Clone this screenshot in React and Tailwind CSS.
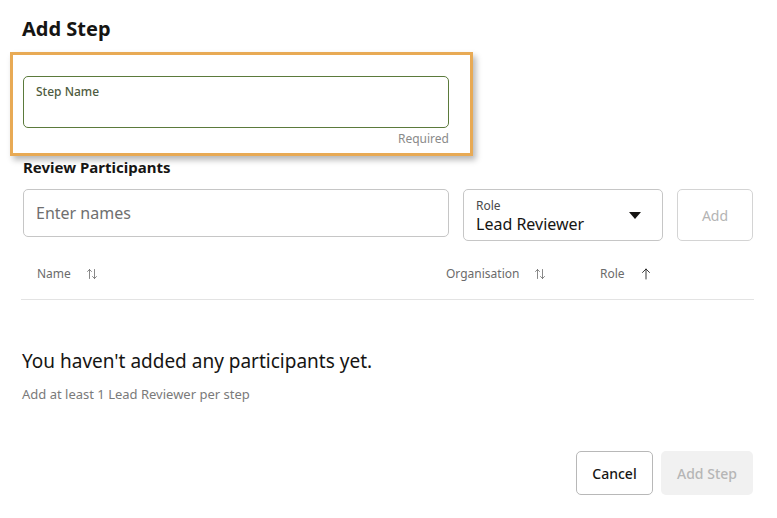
import { useState } from 'react';

function SortIcon() {
    return (
        <svg className="w-[12px] h-[12px]" viewBox="0 0 24 24" fill="none" stroke="currentColor" strokeWidth="1.6" strokeLinecap="round" strokeLinejoin="round">
            <path d="M3 7l4-4 4 4" />
            <path d="M7 3v18" />
            <path d="M13 17l4 4 4-4" />
            <path d="M17 21V3" />
        </svg>
    );
}

function UpIcon() {
    return (
        <svg className="w-[12px] h-[12px]" viewBox="0 0 24 24" fill="none" stroke="currentColor" strokeWidth="1.8" strokeLinecap="round" strokeLinejoin="round">
            <path d="M5 9l7-7 7 7" />
            <path d="M12 2v20" />
        </svg>
    );
}

export default function App() {
    const [names, setNames] = useState('');

    return (
        <div className="relative w-[777px] h-[518px] bg-white font-['Noto_Sans',sans-serif] text-[#161513]">
            <div className="pl-[22px] pr-[23px] pt-[15px]">
                <h1 className="text-[20px] font-bold leading-[28px]">Add Step</h1>

                {/* Step name field + highlight */}
                <div className="relative mt-[33px] ml-[1px] w-[426px]">
                    <div className="h-[52px] rounded-[5px] border border-[#5b7a3b] px-[12px] pt-[1px]">
                        <span className="text-[12px] font-medium leading-4 text-[#4e5b40]">Step Name</span>
                    </div>
                    <div className="mt-[3px] text-right text-[12px] leading-4 text-[#8a8a8a]">Required</div>
                    <div className="pointer-events-none absolute -left-[13px] -top-[24px] w-[463px] h-[104px] border-[3px] border-[#e8aa55] shadow-[3px_4px_6px_rgba(0,0,0,0.28)]" />
                </div>

                {/* Review participants */}
                <h2 className="mt-[10px] ml-[1px] text-[15px] font-bold leading-5">Review Participants</h2>

                <div className="mt-[12px] ml-[1px] flex items-start gap-[14px]">
                    <div className="w-[426px] h-[48px] rounded-[5px] border border-[#c6c6c6] px-[12px] flex items-center">
                        <input
                            value={names}
                            onChange={(e) => setNames(e.target.value)}
                            placeholder="Enter names"
                            className="w-full bg-transparent text-[16px] outline-none placeholder:text-[#6f6f6f]"
                        />
                    </div>
                    <div className="w-[200px] h-[52px] rounded-[5px] border border-[#c6c6c6] pl-[12px] pr-[21px] flex items-center justify-between">
                        <div className="flex flex-col pt-[1px]">
                            <span className="text-[12px] leading-4 text-[#4a4a4a]">Role</span>
                            <span className="text-[16px] leading-5">Lead Reviewer</span>
                        </div>
                        <svg className="w-[12px] h-[7px]" viewBox="0 0 12 7">
                            <path d="M0 0h12L6 7z" fill="#161513" />
                        </svg>
                    </div>
                    <button className="w-[76px] h-[52px] rounded-[5px] border border-[#d4d4d4] text-[14px] text-[#b4b4b4]">
                        Add
                    </button>
                </div>

                {/* Table header */}
                <div className="mt-[13px] h-[40px] flex items-center text-[12px] text-[#6b6b6b]">
                    <div className="w-[424px] pl-[15px] flex items-center gap-[15px]">
                        <span>Name</span>
                        <SortIcon />
                    </div>
                    <div className="w-[154px] flex items-center gap-[15px]">
                        <span>Organisation</span>
                        <SortIcon />
                    </div>
                    <div className="flex items-center gap-[15px]">
                        <span>Role</span>
                        <span className="text-[#222]"><UpIcon /></span>
                    </div>
                </div>
                <div className="mt-[5px] -ml-[1px] border-t border-[#e3e3e3]" />

                {/* Empty state */}
                <p className="mt-[47px] text-[19px] leading-[28px]">You haven't added any participants yet.</p>
                <p className="mt-[10px] text-[13px] leading-[18px] text-[#7a7a7a]">Add at least 1 Lead Reviewer per step</p>

                {/* Footer */}
                <div className="mt-[48px] mr-[1px] flex justify-end gap-[8px]">
                    <button className="w-[77px] h-[44px] rounded-[5px] border border-[#b8b8b8] text-[14px] font-medium text-[#161513]">
                        Cancel
                    </button>
                    <button className="w-[92px] h-[44px] rounded-[5px] bg-[#f1f1f1] text-[14px] font-medium text-[#b6b6b6]">
                        Add Step
                    </button>
                </div>
            </div>
        </div>
    );
}
